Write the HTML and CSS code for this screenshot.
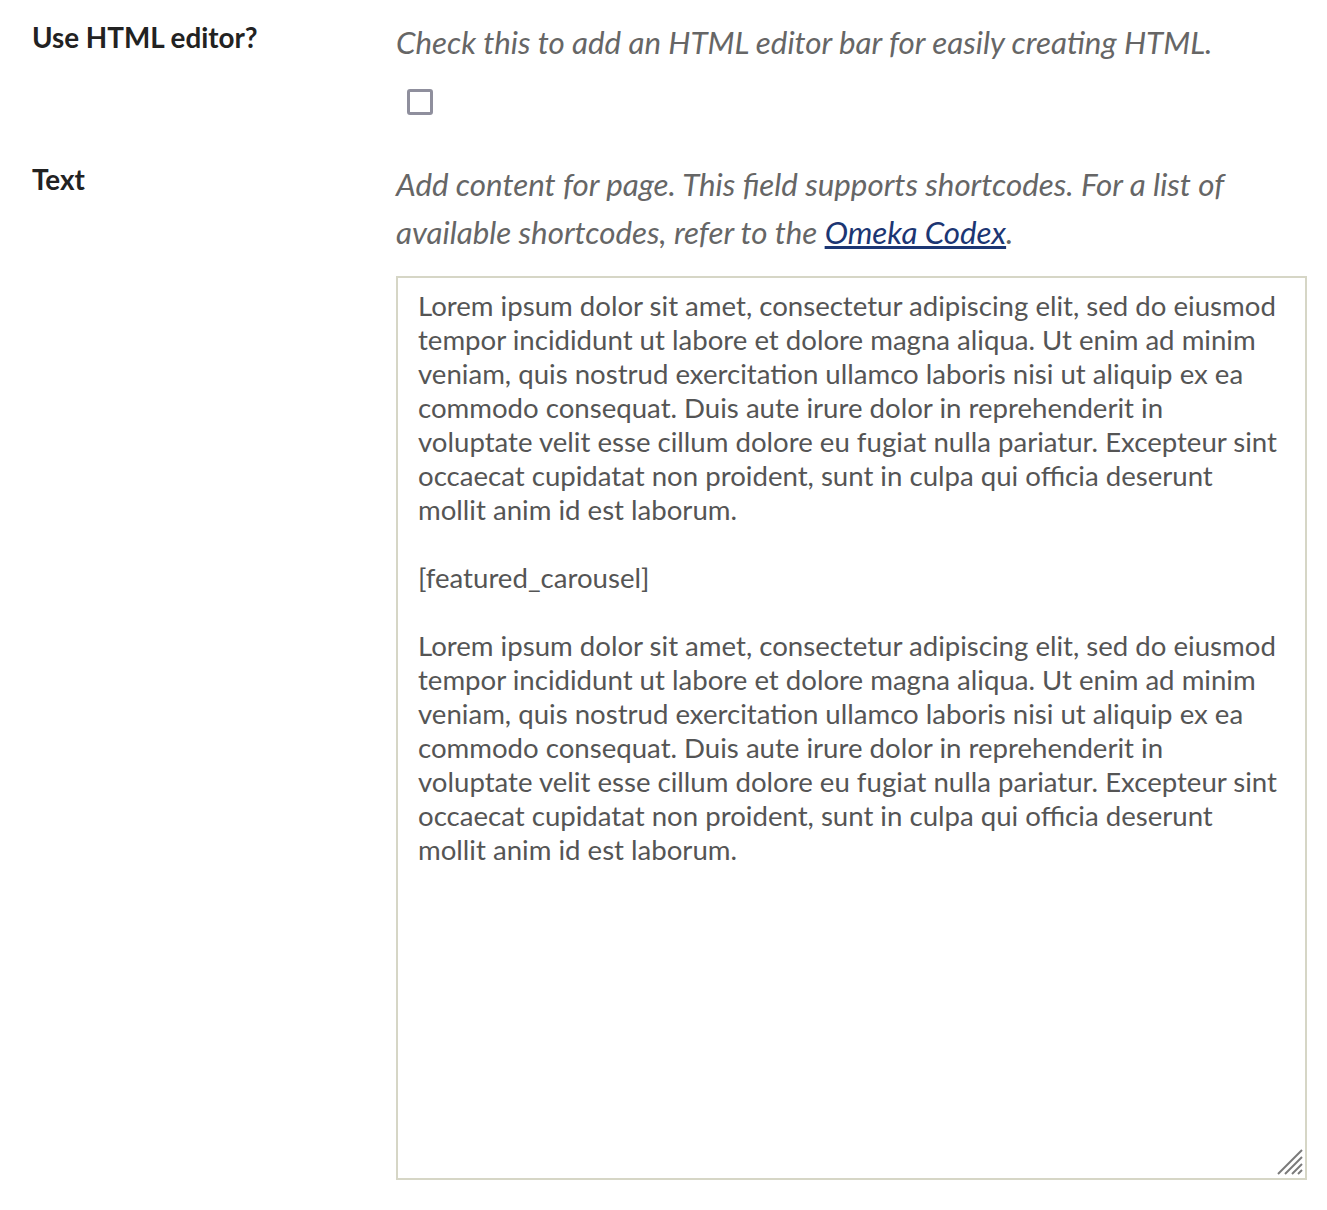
FILE: index.html
```html
<!DOCTYPE html>
<html lang="en">
<head>
<meta charset="utf-8">
<title>Page form</title>
<link rel="stylesheet" href="styles.css">
</head>
<body>
<form class="form">
  <div class="field">
    <label class="label" for="use_tiny_mce">Use HTML editor?</label>
    <div class="inputs">
      <p class="explanation">Check this to add an HTML editor bar for easily creating HTML.</p>
      <input class="checkbox" type="checkbox" id="use_tiny_mce">
    </div>
  </div>
  <div class="field field-text">
    <label class="label" for="text">Text</label>
    <div class="inputs">
      <p class="explanation">Add content for page. This field supports shortcodes. For a list of available shortcodes, refer to the <a href="#">Omeka Codex</a>.</p>
      <div class="textarea-wrap">
        <textarea class="textarea" id="text">Lorem ipsum dolor sit amet, consectetur adipiscing elit, sed do eiusmod
tempor incididunt ut labore et dolore magna aliqua. Ut enim ad minim
veniam, quis nostrud exercitation ullamco laboris nisi ut aliquip ex ea
commodo consequat. Duis aute irure dolor in reprehenderit in
voluptate velit esse cillum dolore eu fugiat nulla pariatur. Excepteur sint
occaecat cupidatat non proident, sunt in culpa qui officia deserunt
mollit anim id est laborum.

[featured_carousel]

Lorem ipsum dolor sit amet, consectetur adipiscing elit, sed do eiusmod
tempor incididunt ut labore et dolore magna aliqua. Ut enim ad minim
veniam, quis nostrud exercitation ullamco laboris nisi ut aliquip ex ea
commodo consequat. Duis aute irure dolor in reprehenderit in
voluptate velit esse cillum dolore eu fugiat nulla pariatur. Excepteur sint
occaecat cupidatat non proident, sunt in culpa qui officia deserunt
mollit anim id est laborum.</textarea>
        <svg class="grip" width="26" height="26" viewBox="0 0 26 26" aria-hidden="true">
          <line x1="1" y1="25" x2="25" y2="1"/>
          <line x1="8" y1="25" x2="25" y2="8"/>
          <line x1="15" y1="25" x2="25" y2="15"/>
          <line x1="21" y1="25" x2="25" y2="21"/>
        </svg>
      </div>
    </div>
  </div>
</form>
</body>
</html>
```

FILE: styles.css
```css
html, body {
  margin: 0;
  padding: 0;
  background: #ffffff;
}

body {
  font-family: Lato, "Open Sans", sans-serif;
  color: #222222;
}

.form {
  padding: 18px 0 0 32px;
  display: flex;
  flex-direction: column;
  gap: 45px;
}

.field {
  display: grid;
  grid-template-columns: 364px 911px;
  align-items: start;
}

.label {
  font-weight: 700;
  font-size: 27.8px;
  line-height: 40px;
  color: #222222;
}

.inputs {
  display: flex;
  flex-direction: column;
  align-items: flex-start;
}

.explanation {
  margin: 0;
  font-style: italic;
  font-size: 31.3px;
  line-height: 48px;
  color: #666666;
}

.explanation a {
  color: #1c3673;
  text-decoration: underline;
}

.checkbox {
  appearance: none;
  -webkit-appearance: none;
  box-sizing: border-box;
  width: 26px;
  height: 26px;
  margin: 23px 0 0 11px;
  border: 3px solid #8f8f9d;
  border-radius: 3px;
  background: #ffffff;
}

.textarea-wrap {
  position: relative;
  margin-top: 20px;
  width: 911px;
  height: 904px;
}

.textarea {
  display: block;
  box-sizing: border-box;
  width: 911px;
  height: 904px;
  margin: 0;
  padding: 11px 18px 11px 20px;
  border: 2px solid #d6d6c6;
  border-radius: 0;
  font-family: Lato, "Open Sans", sans-serif;
  font-size: 27.6px;
  line-height: 34px;
  color: #555555;
  background: #ffffff;
  resize: none;
  outline: none;
}

.grip {
  position: absolute;
  right: 4px;
  bottom: 5px;
  pointer-events: none;
}

.grip line {
  stroke: #7a7a7a;
  stroke-width: 2;
}
```
